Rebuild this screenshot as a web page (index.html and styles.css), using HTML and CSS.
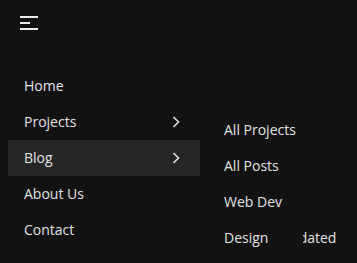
FILE: index.html
```html
<!DOCTYPE html>
<html lang="en">
<head>
    <meta charset="UTF-8">
    <meta name="viewport" content="width=device-width, initial-scale=1.0">
    <title>Menu</title>
    <link rel="stylesheet" href="styles.css">
</head>
<body>
    <header class="topbar">
        <button class="burger" aria-label="Menu">
            <span class="line line-long"></span>
            <span class="line line-short"></span>
            <span class="line line-thin"></span>
        </button>
    </header>

    <div class="menus">
        <ul class="menu">
            <li class="item">Home</li>
            <li class="item">Projects
                <svg class="chev" viewBox="0 0 16 16" width="16" height="16"><path d="M5.5 3 L10.5 8 L5.5 13" fill="none" stroke="currentColor" stroke-width="1.6"/></svg>
            </li>
            <li class="item active">Blog
                <svg class="chev" viewBox="0 0 16 16" width="16" height="16"><path d="M5.5 3 L10.5 8 L5.5 13" fill="none" stroke="currentColor" stroke-width="1.6"/></svg>
            </li>
            <li class="item">About Us</li>
            <li class="item">Contact</li>
        </ul>

        <ul class="submenu">
            <li class="sub-item">All Projects</li>
            <li class="sub-item">All Posts</li>
            <li class="sub-item">Web Dev</li>
            <li class="sub-item">Design
                <span class="clip"><span>Updated</span></span>
            </li>
        </ul>
    </div>
</body>
</html>
```

FILE: styles.css
```css
* {
    box-sizing: border-box;
}

body {
    margin: 0;
    height: 100vh;
    background: #121212;
    color: #e2e2e2;
    font-family: 'Open Sans', sans-serif;
    font-size: 14px;
    overflow: hidden;
}

.topbar {
    padding: 16px 0 0 20px;
    height: 68px;
}

.burger {
    display: flex;
    flex-direction: column;
    gap: 4px;
    padding: 0;
    background: none;
    border: 0;
    width: 18px;
}

.line {
    display: block;
    height: 2px;
    background: #ececec;
    width: 18px;
}

.line-short {
    width: 10px;
}

.line-thin {
    height: 1.5px;
}

.menus {
    display: flex;
    padding-left: 8px;
}

.menu,
.submenu {
    list-style: none;
    margin: 0;
    padding: 0;
}

.menu {
    width: 192px;
}

.item {
    height: 36px;
    display: flex;
    align-items: center;
    justify-content: space-between;
    padding: 0 16px 2px;
}

.item.active {
    background: #262626;
}

.chev {
    display: block;
    margin-top: 2px;
}

.submenu {
    padding-top: 44px;
    padding-left: 24px;
}

.sub-item {
    height: 36px;
    display: flex;
    align-items: center;
    padding-bottom: 2px;
}

.clip {
    width: 33px;
    margin-left: 35px;
    overflow: hidden;
    display: flex;
    justify-content: flex-end;
}

.clip span {
    white-space: nowrap;
}
```
